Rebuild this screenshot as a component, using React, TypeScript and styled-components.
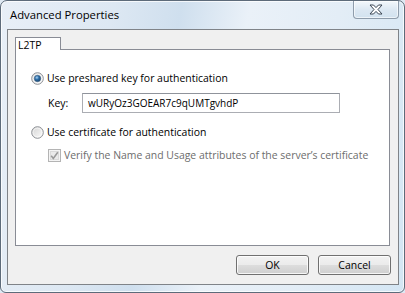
import React from "react";
import styled, { createGlobalStyle } from "styled-components";

const GlobalStyle = createGlobalStyle`
  html, body {
    margin: 0;
    padding: 0;
    background: #dfe9f3;
  }
  body {
    font-family: "Open Sans", "Noto Sans", "Liberation Sans", sans-serif;
    font-size: 10.45px;
    color: #000;
  }
`;

const RadioIcon: React.FC<{ checked?: boolean }> = ({ checked }) => (
  <svg width="13" height="13" viewBox="0 0 13 13">
    <defs>
      <linearGradient id={checked ? "rgOn" : "rgOff"} x1="0" y1="0" x2="1" y2="1">
        <stop offset="0" stopColor="#d2d2d2" />
        <stop offset="1" stopColor="#fdfdfd" />
      </linearGradient>
      <radialGradient id="dot" cx="0.4" cy="0.35" r="0.7">
        <stop offset="0" stopColor="#a9d3f5" />
        <stop offset="0.45" stopColor="#2d6fa8" />
        <stop offset="1" stopColor="#133d66" />
      </radialGradient>
    </defs>
    <circle cx="6.5" cy="6.5" r="5.8" fill={`url(#${checked ? "rgOn" : "rgOff"})`} stroke="#8c8f94" strokeWidth="1" />
    <circle cx="6.5" cy="6.5" r="4.4" fill="none" stroke="#ffffff" strokeOpacity="0.7" strokeWidth="0.8" />
    {checked && <circle cx="6.5" cy="6.5" r="3.2" fill="url(#dot)" stroke="#3a5f83" strokeWidth="0.6" />}
  </svg>
);

const CheckIcon: React.FC = () => (
  <svg width="13" height="13" viewBox="0 0 13 13">
    <rect x="0.5" y="0.5" width="12" height="12" fill="#f4f4f4" stroke="#b4b4b4" />
    <rect x="2.5" y="2.5" width="8" height="8" fill="#eaeaea" stroke="#dadada" />
    <path d="M3.2 6.8 L5.3 9.4 L9.8 3.3" fill="none" stroke="#999999" strokeWidth="1.6" />
  </svg>
);

const CloseGlyph: React.FC = () => (
  <svg width="14" height="11" viewBox="0 0 14 11">
    <path
      d="M1 1 H4.5 L7 3.6 L9.5 1 H13 L9 5.5 L13 10 H9.5 L7 7.4 L4.5 10 H1 L5 5.5 Z"
      fill="#ffffff"
      stroke="#3a4654"
      strokeWidth="1"
      strokeLinejoin="round"
    />
  </svg>
);

const App: React.FC = () => {
  return (
    <>
      <GlobalStyle />
      <Window>
        <TitleBar>
          <Title>Advanced Properties</Title>
          <CloseButton>
            <CloseGlyph />
          </CloseButton>
        </TitleBar>
        <Client>
          <TabStrip>
            <Tab>L2TP</Tab>
          </TabStrip>
          <Panel>
            <OptionRow>
              <RadioIcon checked />
              <span>Use preshared key for authentication</span>
            </OptionRow>
            <KeyRow>
              <KeyLabel>Key:</KeyLabel>
              <KeyInput>wURyOz3GOEAR7c9qUMTgvhdP</KeyInput>
            </KeyRow>
            <OptionRow $gap={11}>
              <RadioIcon />
              <span>Use certificate for authentication</span>
            </OptionRow>
            <CheckRow>
              <CheckIcon />
              <span>Verify the Name and Usage attributes of the server’s certificate</span>
            </CheckRow>
          </Panel>
          <ButtonRow>
            <Button>OK</Button>
            <Button>Cancel</Button>
          </ButtonRow>
        </Client>
      </Window>
    </>
  );
};

const Window = styled.div`
  width: 405px;
  height: 293px;
  box-sizing: border-box;
  border: 1px solid #5d6b7a;
  border-radius: 7px 7px 6px 6px;
  box-shadow: inset 0 0 0 1px rgba(255, 255, 255, 0.75);
  background: linear-gradient(
    100deg,
    #e8eff7 0%,
    #dde8f3 25%,
    #cfdfee 40%,
    #eaf1f8 55%,
    #e3edf6 75%,
    #d4e6f4 100%
  );
  padding: 0 5px 7px 6px;
  display: flex;
  flex-direction: column;
`;

const TitleBar = styled.div`
  height: 28px;
  display: flex;
  align-items: flex-start;
`;

const Title = styled.div`
  font-size: 11.3px;
  padding: 6px 0 0 3px;
  color: #000;
`;

const CloseButton = styled.div`
  margin-left: auto;
  width: 46px;
  height: 18px;
  box-sizing: border-box;
  border: 1px solid #8e9cab;
  border-top: none;
  border-radius: 0 0 4px 4px;
  background: linear-gradient(#f3f8fc, #dbe7f2 55%, #d2e2ef);
  box-shadow: inset 0 0 0 1px rgba(255, 255, 255, 0.6);
  display: flex;
  align-items: center;
  justify-content: center;
`;

const Client = styled.div`
  flex: 1;
  box-sizing: border-box;
  border: 1px solid #7f8388;
  background: #f0f0f0;
  padding: 7px 8px 9px 7px;
  display: flex;
  flex-direction: column;
`;

const TabStrip = styled.div`
  display: flex;
`;

const Tab = styled.div`
  position: relative;
  z-index: 1;
  width: 46px;
  height: 13px;
  box-sizing: border-box;
  border: 1px solid #898c95;
  border-bottom: none;
  background: #fff;
  margin-bottom: -1px;
  padding: 1px 0 0 2px;
  line-height: 12px;
`;

const Panel = styled.div`
  flex: 1;
  box-sizing: border-box;
  border: 1px solid #898c95;
  background: #fff;
  padding: 20px 0 0 15px;
  display: flex;
  flex-direction: column;
`;

const OptionRow = styled.div<{ $gap?: number }>`
  display: flex;
  align-items: center;
  gap: 3px;
  height: 16px;
  margin-top: ${(p) => p.$gap ?? 0}px;
`;

const KeyRow = styled.div`
  display: flex;
  align-items: center;
  margin: 7px 0 0 17px;
  height: 20px;
`;

const KeyLabel = styled.div`
  width: 34px;
`;

const KeyInput = styled.div`
  width: 258px;
  height: 20px;
  box-sizing: border-box;
  border: 1px solid #abadb3;
  border-top-color: #8f939b;
  background: #fff;
  padding-left: 5px;
  font-size: 10px;
  display: flex;
  align-items: center;
`;

const CheckRow = styled.div`
  display: flex;
  align-items: center;
  gap: 3px;
  height: 16px;
  margin: 7px 0 0 17px;
  color: #6d6d6d;
`;

const ButtonRow = styled.div`
  display: flex;
  justify-content: flex-end;
  gap: 9px;
  margin-top: 9px;
  margin-right: -1px;
`;

const Button = styled.div`
  width: 73px;
  height: 20px;
  box-sizing: border-box;
  border: 1px solid #707070;
  border-radius: 3px;
  background: linear-gradient(#f2f2f2 0%, #ebebeb 50%, #dddddd 51%, #cfcfcf 100%);
  box-shadow: inset 0 0 0 1px rgba(255, 255, 255, 0.8);
  display: flex;
  align-items: center;
  justify-content: center;
`;

export default App;
